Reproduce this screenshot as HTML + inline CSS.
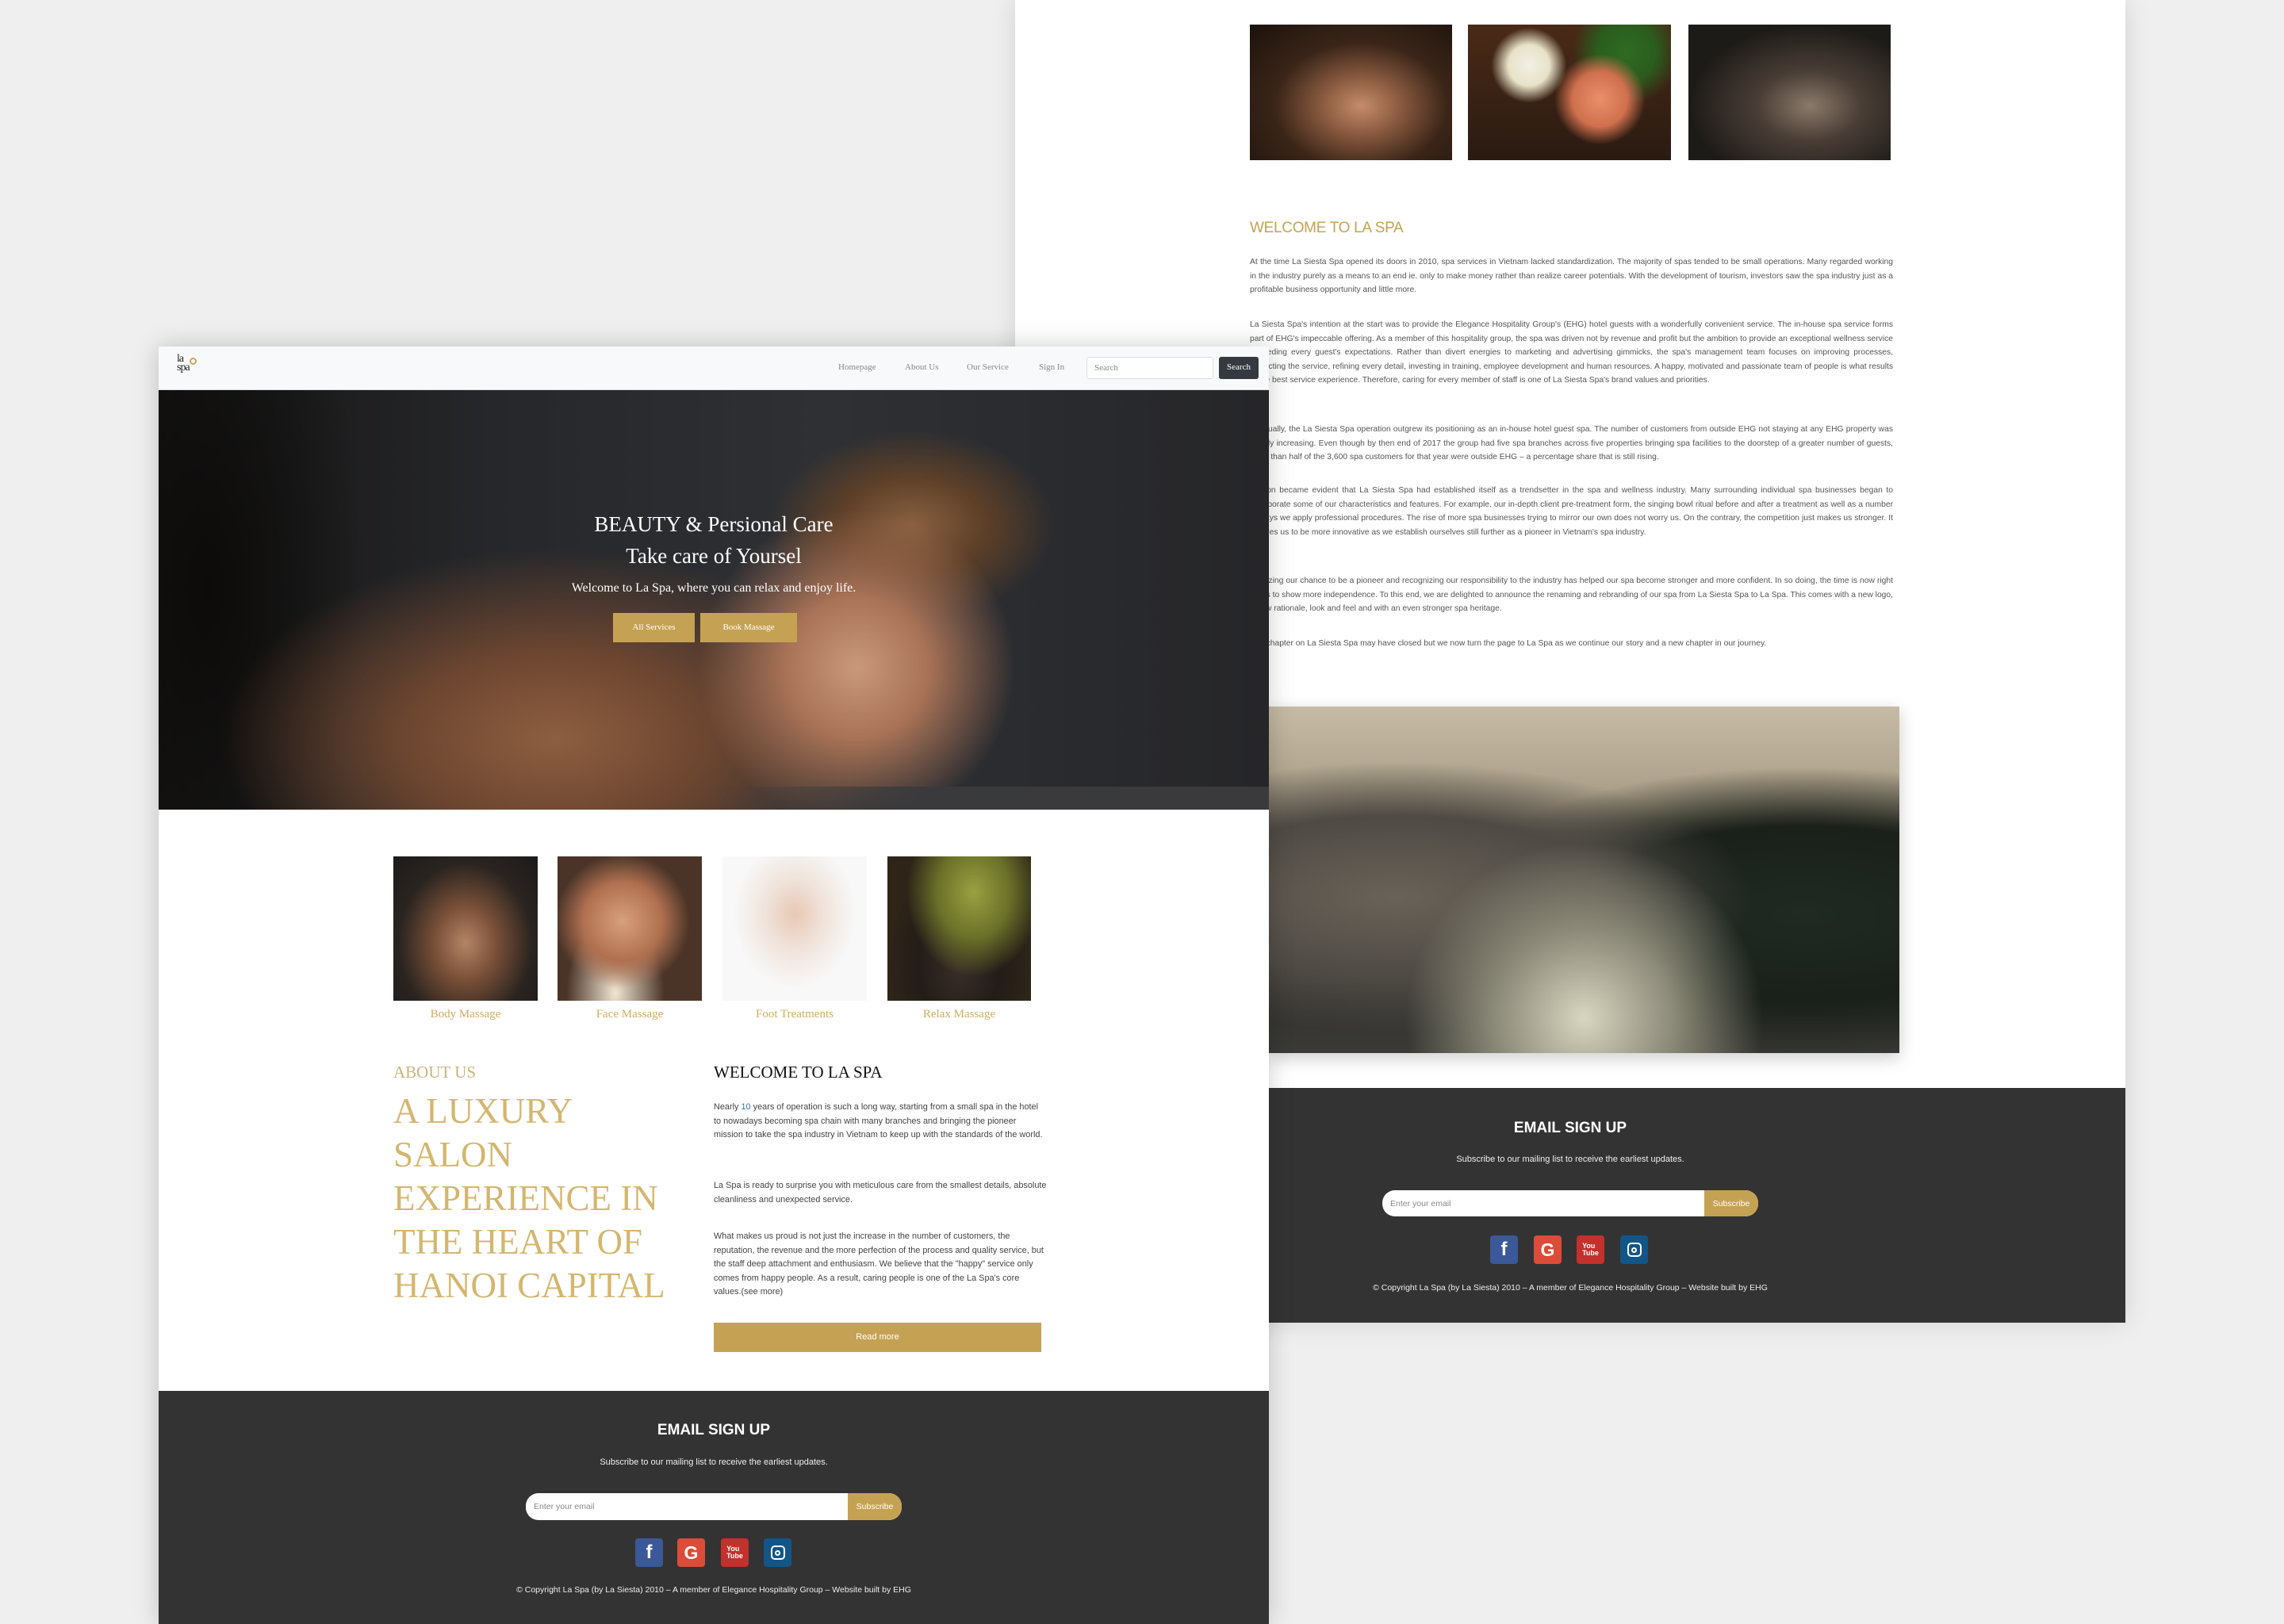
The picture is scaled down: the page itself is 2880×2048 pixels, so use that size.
<!DOCTYPE html>
<html><head><meta charset="utf-8">
<style>
*{margin:0;padding:0;box-sizing:border-box}
body{width:2880px;height:2048px;background:#efefef;position:relative;overflow:hidden;font-family:"Liberation Sans",sans-serif}
.abs{position:absolute}
#back{left:1280px;top:0;width:1400px;height:1668px;background:#fff;box-shadow:0 0 30px rgba(0,0,0,.12)}
#front{left:200px;top:437px;width:1400px;height:1611px;background:#fff;box-shadow:0 0 30px rgba(0,0,0,.2)}
.p{position:absolute;font-size:10.3px;line-height:17.6px;color:#555;text-align:justify}
.inp{position:absolute;background:#fff;border-radius:16px;overflow:hidden}
.inp span{position:absolute;left:10px;top:50%;transform:translateY(-50%);font-size:10.5px;color:#888}
.inp b{position:absolute;right:0;top:0;bottom:0;background:#c5a253;color:#fff;font-weight:normal;font-size:10.5px;display:flex;align-items:center;justify-content:center}
.ic{position:absolute;width:35px;height:36px;border-radius:4px;display:flex;align-items:center;justify-content:center;color:#fff;font-weight:bold}
.serif{font-family:"Liberation Serif",serif}
</style></head><body>

<div id="back" class="abs">
  <div class="abs" style="left:296px;top:31px;width:255px;height:171px;background:radial-gradient(ellipse at 55% 60%,#c58c6a 0,#8a5a40 25%,#3a2518 55%,#1a120c 100%)"></div>
  <div class="abs" style="left:571px;top:31px;width:256px;height:171px;background:radial-gradient(circle at 30% 30%,#f2f0e6 0,#e8e2c8 12%,transparent 22%),radial-gradient(circle at 65% 55%,#e98f6a 0,#d0704e 18%,transparent 30%),radial-gradient(circle at 78% 20%,#2f6b22 0,#2a5d1e 15%,transparent 28%),linear-gradient(#4a2a16,#2a1a12)"></div>
  <div class="abs" style="left:849px;top:31px;width:255px;height:171px;background:radial-gradient(ellipse at 60% 60%,#8b7a6a 0,#4a3e36 30%,#1d1b18 70%),#1d1b18"></div>
  <div class="abs" style="left:296px;top:277px;font-size:19px;color:#c5a253;letter-spacing:-.3px">WELCOME TO LA SPA</div>
  <div class="p" style="left:296px;top:322px;width:811px">At the time La Siesta Spa opened its doors in 2010, spa services in Vietnam lacked standardization. The majority of spas tended to be small operations. Many regarded working in the industry purely as a means to an end ie. only to make money rather than realize career potentials. With the development of tourism, investors saw the spa industry just as a profitable business opportunity and little more.</div>
  <div class="p" style="left:296px;top:401px;width:811px">La Siesta Spa's intention at the start was to provide the Elegance Hospitality Group's (EHG) hotel guests with a wonderfully convenient service. The in-house spa service forms part of EHG's impeccable offering. As a member of this hospitality group, the spa was driven not by revenue and profit but the ambition to provide an exceptional wellness service exceeding every guest's expectations. Rather than divert energies to marketing and advertising gimmicks, the spa's management team focuses on improving processes, perfecting the service, refining every detail, investing in training, employee development and human resources. A happy, motivated and passionate team of people is what results in the best service experience. Therefore, caring for every member of staff is one of La Siesta Spa's brand values and priorities.</div>
  <div class="p" style="left:296px;top:533px;width:811px">Gradually, the La Siesta Spa operation outgrew its positioning as an in-house hotel guest spa. The number of customers from outside EHG not staying at any EHG property was rapidly increasing. Even though by then end of 2017 the group had five spa branches across five properties bringing spa facilities to the doorstep of a greater number of guests, more than half of the 3,600 spa customers for that year were outside EHG – a percentage share that is still rising.</div>
  <div class="p" style="left:296px;top:610px;width:811px">It soon became evident that La Siesta Spa had established itself as a trendsetter in the spa and wellness industry. Many surrounding individual spa businesses began to incorporate some of our characteristics and features. For example, our in-depth client pre-treatment form, the singing bowl ritual before and after a treatment as well as a number of ways we apply professional procedures. The rise of more spa businesses trying to mirror our own does not worry us. On the contrary, the competition just makes us stronger. It inspires us to be more innovative as we establish ourselves still further as a pioneer in Vietnam's spa industry.</div>
  <div class="p" style="left:296px;top:724px;width:811px">Realizing our chance to be a pioneer and recognizing our responsibility to the industry has helped our spa become stronger and more confident. In so doing, the time is now right for us to show more independence. To this end, we are delighted to announce the renaming and rebranding of our spa from La Siesta Spa to La Spa. This comes with a new logo, a new rationale, look and feel and with an even stronger spa heritage.</div>
  <div class="p" style="left:296px;top:803px;width:811px">The chapter on La Siesta Spa may have closed but we now turn the page to La Spa as we continue our story and a new chapter in our journey.</div>
  <div class="abs" style="left:320px;top:891px;width:795px;height:437px;box-shadow:0 6px 20px rgba(0,0,0,.2);background:radial-gradient(ellipse at 50% 90%,#d8d5c0 0,#8c8a78 20%,transparent 40%),radial-gradient(ellipse at 20% 55%,#6a6258 0,#4e4a44 30%,transparent 50%),radial-gradient(ellipse at 85% 60%,#1f2a22 0,#1a201a 30%,transparent 50%),linear-gradient(#c6bba4 0,#a69a84 30%,#5c564e 48%,#2e2b28 70%,#3a3a36 100%)"></div>
  <div class="abs" style="left:0;top:1372px;width:1400px;height:296px;background:#333;color:#fff">
    <div class="abs" style="left:580px;width:240px;text-align:center;top:40px;font-weight:bold;font-size:19px">EMAIL SIGN UP</div>
    <div class="abs" style="left:500px;width:400px;text-align:center;top:84px;font-size:11px;color:#eee">Subscribe to our mailing list to receive the earliest updates.</div>
    <div class="inp" style="left:463px;top:129px;width:474px;height:33px"><span>Enter your email</span><b style="width:68px">Subscribe</b></div>
    <div class="ic" style="left:599px;top:186px;background:#3b5998;font-size:24px">f</div>
    <div class="ic" style="left:654px;top:186px;background:#dd4b39;font-size:23px">G</div>
    <div class="ic" style="left:708px;top:186px;background:#c4302b;font-size:9px;line-height:9px;flex-direction:column">You<br>Tube</div>
    <div class="ic" style="left:763px;top:186px;background:#125688"><div style="width:18px;height:18px;border:2.5px solid #fff;border-radius:5px;display:flex;align-items:center;justify-content:center"><div style="width:7px;height:7px;border:2px solid #fff;border-radius:50%"></div></div></div>
    <div class="abs" style="left:400px;width:600px;text-align:center;top:246px;font-size:10.5px;color:#eee">© Copyright La Spa (by La Siesta) 2010 – A member of Elegance Hospitality Group – Website built by EHG</div>
  </div>
</div>

<div id="front" class="abs">
  <div class="abs" style="left:0;top:0;width:1400px;height:55px;background:#f8f9fa;border-bottom:1px solid #ddd">
    <div class="abs serif" style="left:23px;top:10px;font-size:14px;line-height:11px;color:#222;letter-spacing:-1px">la<br>spa</div>
    <div class="abs" style="left:39px;top:14px;width:9px;height:9px;border:2px solid #c9a55a;border-radius:50%"></div>
    <div class="abs serif" style="left:857px;top:20px;font-size:11px;color:#888">Homepage</div>
    <div class="abs serif" style="left:941px;top:20px;font-size:11px;color:#888">About Us</div>
    <div class="abs serif" style="left:1019px;top:20px;font-size:11px;color:#888">Our Service</div>
    <div class="abs serif" style="left:1110px;top:20px;font-size:11px;color:#888">Sign In</div>
    <div class="abs serif" style="left:1170px;top:13px;width:160px;height:28px;background:#fff;border:1px solid #ddd;border-radius:3px;font-size:11px;color:#888;padding:7px 9px">Search</div>
    <div class="abs serif" style="left:1337px;top:13px;width:50px;height:28px;background:#343a40;border-radius:3px;font-size:11px;color:#fff;text-align:center;padding-top:7px">Search</div>
  </div>
  <div class="abs" style="left:0;top:55px;width:1400px;height:529px;overflow:hidden;background:radial-gradient(ellipse 200px 200px at 880px 350px,#c9987a 0,#a87256 45%,transparent 100%),radial-gradient(ellipse 180px 120px at 950px 170px,#8a6040 0,#5e4028 50%,transparent 100%),radial-gradient(ellipse 420px 240px at 500px 440px,#8d5e40 0,#6d4630 45%,transparent 100%),radial-gradient(ellipse 200px 500px at 60px 250px,#0c0b0a 0,transparent 100%),linear-gradient(90deg,#151413 0,#26272a 30%,#2e3034 60%,#262629 100%)">
    <div class="abs" style="left:0;right:0;top:500px;height:29px;background:linear-gradient(90deg,transparent 50%,#3a3a3c 70%)"></div>
  </div>
  <div class="abs serif" style="left:-100px;width:1600px;text-align:center;top:204px;color:#fff;font-size:27px;line-height:40px">BEAUTY &amp; Persional Care<br>Take care of Yoursel</div>
  <div class="abs serif" style="left:300px;width:800px;text-align:center;top:296px;color:#fff;font-size:16px">Welcome to La Spa, where you can relax and enjoy life.</div>
  <div class="abs serif" style="left:573px;top:336px;width:103px;height:37px;background:#c5a253;color:#fff;font-size:11px;text-align:center;padding-top:12px">All Services</div>
  <div class="abs serif" style="left:683px;top:336px;width:122px;height:37px;background:#c5a253;color:#fff;font-size:11px;text-align:center;padding-top:12px">Book Massage</div>

  <div class="abs" style="left:296px;top:643px;width:182px;height:182px;background:radial-gradient(ellipse at 50% 60%,#b58466 0,#7a5038 30%,#2a2420 65%,#1c1a1a 100%)"></div>
  <div class="abs" style="left:503px;top:643px;width:182px;height:182px;background:radial-gradient(ellipse at 45% 45%,#d8a07c 0,#b07050 35%,transparent 60%),radial-gradient(ellipse at 40% 95%,#f2e6d2 0,transparent 40%),#4a3428"></div>
  <div class="abs" style="left:711px;top:643px;width:182px;height:182px;background:radial-gradient(ellipse at 50% 40%,#e8c8b4 0,#f0e4dc 30%,#f8f8f8 60%),#fafafa"></div>
  <div class="abs" style="left:919px;top:643px;width:181px;height:182px;background:radial-gradient(ellipse at 60% 25%,#9aa040 0,#6a7028 30%,transparent 55%),radial-gradient(ellipse at 50% 75%,#3a2e28 0,#231c18 40%,transparent 70%),#2e2418"></div>
  <div class="abs serif" style="left:296px;width:182px;text-align:center;top:834px;color:#d0ad5e;font-size:15px">Body Massage</div>
  <div class="abs serif" style="left:503px;width:182px;text-align:center;top:834px;color:#d0ad5e;font-size:15px">Face Massage</div>
  <div class="abs serif" style="left:711px;width:182px;text-align:center;top:834px;color:#d0ad5e;font-size:15px">Foot Treatments</div>
  <div class="abs serif" style="left:919px;width:181px;text-align:center;top:834px;color:#d0ad5e;font-size:15px">Relax Massage</div>

  <div class="abs serif" style="left:296px;top:903px;color:#cdb27a;font-size:21px">ABOUT US</div>
  <div class="abs serif" style="left:296px;top:937px;color:#d4b66e;font-size:45px;line-height:55px;width:380px">A LUXURY<br>SALON<br>EXPERIENCE IN<br>THE HEART OF<br>HANOI CAPITAL</div>
  <div class="abs serif" style="left:700px;top:903px;color:#111;font-size:21px">WELCOME TO LA SPA</div>
  <div class="p" style="left:700px;top:951px;width:420px;text-align:left;color:#444;font-size:10.9px">Nearly <span style="color:#3b6fb0">10</span> years of operation is such a long way, starting from a small spa in the hotel to nowadays becoming spa chain with many branches and bringing the pioneer mission to take the spa industry in Vietnam to keep up with the standards of the world.</div>
  <div class="p" style="left:700px;top:1050px;width:420px;text-align:left;color:#444;font-size:10.9px">La Spa is ready to surprise you with meticulous care from the smallest details, absolute cleanliness and unexpected service.</div>
  <div class="p" style="left:700px;top:1114px;width:420px;text-align:left;color:#444;font-size:10.9px">What makes us proud is not just the increase in the number of customers, the reputation, the revenue and the more perfection of the process and quality service, but the staff deep attachment and enthusiasm. We believe that the "happy" service only comes from happy people. As a result, caring people is one of the La Spa's core values.(see more)</div>
  <div class="abs" style="left:700px;top:1231px;width:413px;height:37px;background:#c5a253;color:#fff;font-size:11px;text-align:center;padding-top:12px">Read more</div>

  <div class="abs" style="left:0;top:1317px;width:1400px;height:294px;background:#333;color:#fff">
    <div class="abs" style="left:500px;width:400px;text-align:center;top:39px;font-weight:bold;font-size:19px">EMAIL SIGN UP</div>
    <div class="abs" style="left:450px;width:500px;text-align:center;top:84px;font-size:11px;color:#eee">Subscribe to our mailing list to receive the earliest updates.</div>
    <div class="inp" style="left:463px;top:129px;width:474px;height:34px"><span>Enter your email</span><b style="width:68px">Subscribe</b></div>
    <div class="ic" style="left:601px;top:186px;background:#3b5998;font-size:24px">f</div>
    <div class="ic" style="left:654px;top:186px;background:#dd4b39;font-size:23px">G</div>
    <div class="ic" style="left:709px;top:186px;background:#c4302b;font-size:9px;line-height:9px;flex-direction:column">You<br>Tube</div>
    <div class="ic" style="left:763px;top:186px;background:#125688"><div style="width:18px;height:18px;border:2.5px solid #fff;border-radius:5px;display:flex;align-items:center;justify-content:center"><div style="width:7px;height:7px;border:2px solid #fff;border-radius:50%"></div></div></div>
    <div class="abs" style="left:300px;width:800px;text-align:center;top:245px;font-size:10.5px;color:#eee">© Copyright La Spa (by La Siesta) 2010 – A member of Elegance Hospitality Group – Website built by EHG</div>
  </div>
</div>
</body></html>
